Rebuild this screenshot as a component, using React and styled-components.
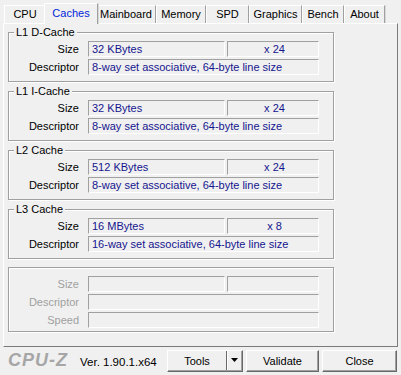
import React from 'react';
import styled, { createGlobalStyle } from 'styled-components';

const GlobalStyle = createGlobalStyle`
  html, body {
    margin: 0;
    padding: 0;
    background: #f0f0f0;
  }

  body {
    font-family: "Liberation Sans", Arial, sans-serif;
    font-size: 11px;
    color: #000;
  }
`;

const Window = styled.div`
  width: 401px;
  height: 375px;
  box-sizing: border-box;
  padding: 3px 3px 0 3px;
  display: flex;
  flex-direction: column;
  overflow: hidden;
`;

const TabBar = styled.div`
  display: flex;
  align-items: flex-end;
  height: 20px;
  padding-left: 1px;
`;

const Tab = styled.div`
  position: relative;
  box-sizing: border-box;
  width: ${(p) => (p.$active ? p.$width + 4 : p.$width)}px;
  height: ${(p) => (p.$active ? 21 : 18)}px;
  margin: ${(p) => (p.$active ? '0 -2px -1px -2px' : '0')};
  z-index: ${(p) => (p.$active ? 1 : 0)};
  display: flex;
  align-items: center;
  justify-content: center;
  padding-bottom: ${(p) => (p.$active ? 3 : 1)}px;
  background: #f0f0f0;
  border-top: 1px solid #fff;
  border-left: 1px solid #fff;
  border-right: 1px solid #a0a0a0;
  box-shadow: 1px 0 0 #d8d8d8;
  color: ${(p) => (p.$active ? '#0026d9' : '#000')};
  font-size: 11px;
  white-space: nowrap;
`;

const Panel = styled.div`
  box-sizing: border-box;
  height: 325px;
  padding: 2px 0 0 4px;
  border: 1px solid;
  border-color: #fff #7a7a7a #7a7a7a #fff;
  display: flex;
  flex-direction: column;
`;

const Group = styled.fieldset`
  box-sizing: border-box;
  width: 326px;
  min-inline-size: 0;
  margin: ${(p) => (p.$plain ? '5px 0 0 0' : '0 0 3px 0')};
  padding: ${(p) => (p.$plain ? '8px 0 3px 0' : '2px 0 6px 0')};
  border: 1px solid #a0a0a0;
  box-shadow: inset 1px 1px 0 #fff, 1px 1px 0 #fff;
  display: flex;
  flex-direction: column;
  gap: 2px;
`;

const Legend = styled.legend`
  margin-left: 5px;
  padding: 0 2px;
  line-height: 13px;
  font-size: 11px;
  background: #f0f0f0;
`;

const Row = styled.div`
  display: flex;
  align-items: center;
  gap: 2px;
`;

const Label = styled.div`
  width: 70px;
  margin-right: 7px;
  text-align: right;
  line-height: 16px;
  font-size: 11px;
  color: ${(p) => (p.$disabled ? '#a0a0a0' : '#000')};
`;

const Field = styled.div`
  box-sizing: border-box;
  width: ${(p) => p.$width}px;
  height: 16px;
  padding-left: 3px;
  border: 1px solid;
  border-color: #a0a0a0 #fff #fff #a0a0a0;
  line-height: 14px;
  font-size: 11px;
  color: #15158f;
  text-align: ${(p) => (p.$center ? 'center' : 'left')};
  white-space: nowrap;
  overflow: hidden;
`;

const BottomBar = styled.div`
  height: 27px;
  display: flex;
  align-items: center;
  padding: 0 1px 1px 5px;
`;

const Logo = styled.div`
  width: 72px;
  font-family: "Liberation Sans", Arial, sans-serif;
  font-size: 18px;
  font-weight: bold;
  font-style: italic;
  letter-spacing: 1px;
  color: #a6a6a6;
`;

const Version = styled.div`
  flex: 1;
  font-size: 11.5px;
  padding-top: 2px;
`;

const Button = styled.button`
  box-sizing: border-box;
  width: ${(p) => p.$width}px;
  height: 22px;
  margin-left: 3px;
  padding: 0;
  display: flex;
  align-items: stretch;
  justify-content: center;
  background: #f0f0f0;
  border: 1px solid;
  border-color: #fff #696969 #696969 #fff;
  box-shadow: inset -1px -1px 0 #a0a0a0;
  font-family: "Liberation Sans", Arial, sans-serif;
  font-size: 11px;
  color: #000;
`;

const ButtonText = styled.span`
  flex: 1;
  display: flex;
  align-items: center;
  justify-content: center;
`;

const ArrowPart = styled.span`
  width: 15px;
  display: flex;
  align-items: center;
  justify-content: center;
  border-left: 1px solid #696969;
  box-shadow: inset 1px 0 0 #fff;
  margin-bottom: 1px;
`;

const tabs = [
  { name: 'CPU', width: 42 },
  { name: 'Caches', width: 50, active: true },
  { name: 'Mainboard', width: 60 },
  { name: 'Memory', width: 50 },
  { name: 'SPD', width: 43 },
  { name: 'Graphics', width: 53 },
  { name: 'Bench', width: 42 },
  { name: 'About', width: 41 },
];

const lineDesc = (ways) => `${ways}-way set associative, 64-byte line size`;

const caches = [
  { title: 'L1 D-Cache', size: '32 KBytes', count: 'x 24', desc: lineDesc(8) },
  { title: 'L1 I-Cache', size: '32 KBytes', count: 'x 24', desc: lineDesc(8) },
  { title: 'L2 Cache', size: '512 KBytes', count: 'x 24', desc: lineDesc(8) },
  { title: 'L3 Cache', size: '16 MBytes', count: 'x 8', desc: lineDesc(16) },
];

function CacheGroup({ cache }) {
  return (
    <Group>
      <Legend>{cache.title}</Legend>
      <Row>
        <Label>Size</Label>
        <Field $width={137}>{cache.size}</Field>
        <Field $width={92} $center>{cache.count}</Field>
      </Row>
      <Row>
        <Label>Descriptor</Label>
        <Field $width={231}>{cache.desc}</Field>
      </Row>
    </Group>
  );
}

function EmptyGroup() {
  return (
    <Group $plain>
      <Row>
        <Label $disabled>Size</Label>
        <Field $width={137} />
        <Field $width={92} />
      </Row>
      <Row>
        <Label $disabled>Descriptor</Label>
        <Field $width={231} />
      </Row>
      <Row>
        <Label $disabled>Speed</Label>
        <Field $width={231} />
      </Row>
    </Group>
  );
}

export default function App() {
  return (
    <>
      <GlobalStyle />
      <Window>
        <TabBar>
          {tabs.map((t) => (
            <Tab key={t.name} $width={t.width} $active={t.active}>
              {t.name}
            </Tab>
          ))}
        </TabBar>
        <Panel>
          {caches.map((c) => (
            <CacheGroup key={c.title} cache={c} />
          ))}
          <EmptyGroup />
        </Panel>
        <BottomBar>
          <Logo>CPU-Z</Logo>
          <Version>Ver. 1.90.1.x64</Version>
          <Button $width={76}>
            <ButtonText>Tools</ButtonText>
            <ArrowPart>
              <svg width="7" height="4" viewBox="0 0 7 4">
                <polygon points="0,0 7,0 3.5,4" fill="#000" />
              </svg>
            </ArrowPart>
          </Button>
          <Button $width={73}>
            <ButtonText>Validate</ButtonText>
          </Button>
          <Button $width={75}>
            <ButtonText>Close</ButtonText>
          </Button>
        </BottomBar>
      </Window>
    </>
  );
}
